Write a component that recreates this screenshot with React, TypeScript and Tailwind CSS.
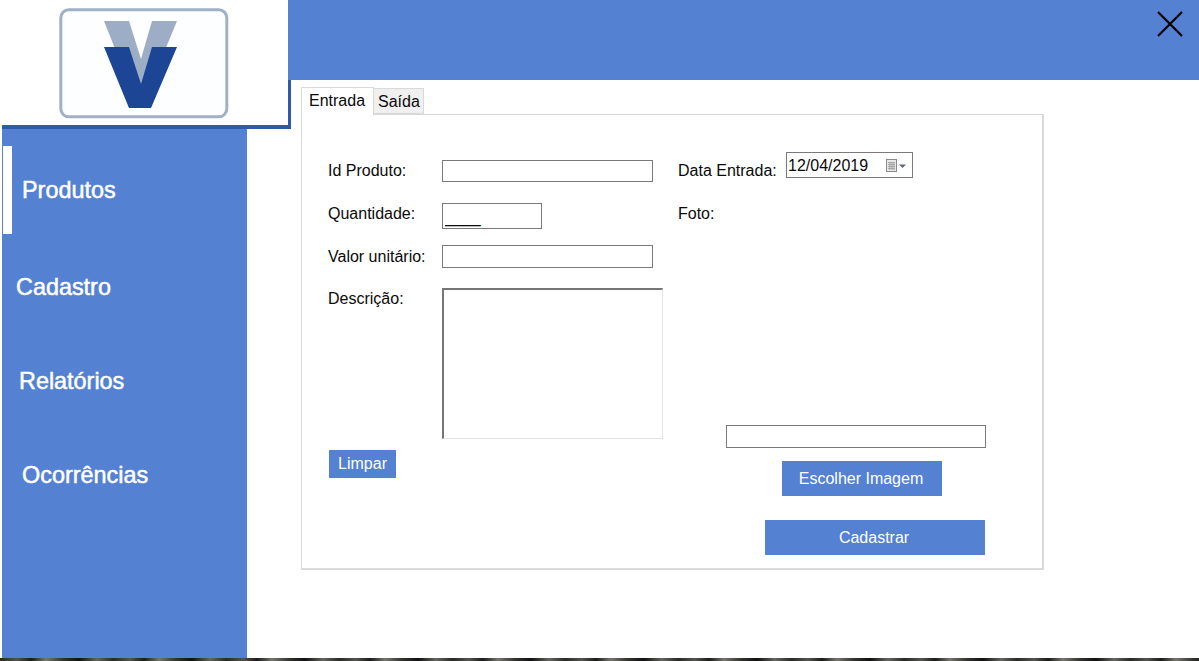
import React from "react";

const inputCls = "block border border-[#7a7a7a] bg-white outline-none";
const btn = "flex items-center justify-center bg-[#5481d1] text-white text-[16px]";

function Logo() {
  return (
    <svg width="286" height="125" viewBox="2 0 286 125" className="block">
      <rect x="60.8" y="9.8" width="166" height="107" rx="8" fill="#fdfeff" stroke="#a0b0c8" strokeWidth="3" />
      <polygon points="104,21 129,21 141,59 152,21 177,21 151,84 129,84" fill="#9dadc6" />
      <polygon points="104,47 129,47 141,84 152,47 177,47 151,108 129,108" fill="#1c4596" />
    </svg>
  );
}

function NavItem({ label, className }: { label: string; className: string }) {
  return <div className={"text-white text-[23.4px] leading-[24px] [-webkit-text-stroke:0.5px_white] " + className}>{label}</div>;
}

function Row({ label, children, className, labelClass }: { label: string; children: React.ReactNode; className?: string; labelClass?: string }) {
  return (
    <div className={"flex items-center " + (className ?? "")}>
      <div className={"w-[114px] shrink-0 text-[16px] leading-[18px] " + (labelClass ?? "")}>{label}</div>
      {children}
    </div>
  );
}

export default function App() {
  return (
    <div className="w-[1199px] h-[661px] overflow-hidden bg-white text-[#0a0a0a] font-['Liberation_Sans',Arial,sans-serif]">
      <div className="flex h-[658px]">
        <div className="w-[288px] shrink-0 flex flex-col">
          <div className="ml-[2px] h-[129px] border-b-4 border-[#2e5aac] bg-white">
            <Logo />
          </div>
          <nav className="ml-[2px] w-[245px] flex-1 bg-[#5481d1] flex flex-col">
            <div className="mt-[17px] flex items-center h-[88px] ml-[1px]">
              <div className="w-[9px] h-[88px] bg-white" />
              <NavItem label="Produtos" className="ml-[10px]" />
            </div>
            <NavItem label="Cadastro" className="ml-[14px] mt-[41px]" />
            <NavItem label="Relatórios" className="ml-[17px] mt-[70px]" />
            <NavItem label="Ocorrências" className="ml-[20px] mt-[70px]" />
          </nav>
        </div>

        <div className="flex-1 flex flex-col">
          <header className="h-[80px] bg-[#5481d1] flex justify-end pt-[11px] pr-[16px]">
            <svg width="26" height="26" viewBox="0 0 26 26" className="block">
              <path d="M1 1 L25 25 M25 1 L1 25" stroke="#000" strokeWidth="2.2" fill="none" />
            </svg>
          </header>
          <div className="flex flex-1">
            <div className="w-[3px] h-[49px] bg-[#2e5aac]" />
            <div className="ml-[10px] pt-[7px]">
              <div className="flex items-end h-[28px] relative z-10">
                <div className="w-[73px] h-[28px] border border-b-0 border-[#d9d9d9] bg-white pl-[7px] pt-[3px] text-[16px] leading-[19px]">Entrada</div>
                <div className="w-[50px] h-[26px] border border-l-0 border-[#d9d9d9] bg-[#f0f0f0] pl-[4px] pt-[3px] text-[16px] leading-[19px] -translate-y-[1px]">Saída</div>
              </div>
              <div className="-mt-[1px] w-[743px] h-[456px] border border-[#d9d9d9] border-r-2 border-b-2 bg-white flex">
                <div className="w-[376px] shrink-0 pl-[26px] pt-[45px] flex flex-col">
                  <Row label="Id Produto:">
                    <input readOnly className={inputCls + " w-[211px] h-[22px]"} />
                  </Row>
                  <Row label="Quantidade:" className="mt-[21px]" labelClass="-translate-y-[2px]">
                    <input readOnly value="____" className={inputCls + " w-[100px] h-[26px] pl-[2px] pt-[3px] text-[16px]"} />
                  </Row>
                  <Row label="Valor unitário:" className="mt-[16px]">
                    <input readOnly className={inputCls + " w-[211px] h-[23px]"} />
                  </Row>
                  <div className="flex items-start mt-[20px]">
                    <div className="w-[114px] shrink-0 pt-[2px] text-[16px] leading-[18px]">Descrição:</div>
                    <div className="w-[221px] h-[151px] border border-[#e3e3e3] border-t-[#767676] border-l-[#767676] border-t-2 border-l-2" />
                  </div>
                  <div className={btn + " mt-[11px] ml-[1px] w-[67px] h-[28px]"}>Limpar</div>
                </div>
                <div className="flex-1 pt-[37px] flex flex-col">
                  <div className="flex items-start">
                    <div className="pt-[10px] text-[16px] leading-[18px] w-[108px]">Data Entrada:</div>
                    <div className="w-[127px] h-[26px] border border-[#7a7a7a] flex items-center pl-[1px] pt-[1px] text-[16px] leading-[18px]">
                      <span className="w-[98px]">12/04/2019</span>
                      <svg width="22" height="14" viewBox="0 0 22 14" className="block">
                        <rect x="0.5" y="0.5" width="10" height="12" fill="#e8e8e8" stroke="#8a8a8a" />
                        <path d="M2 3.5H9M2 5.5H9M2 7.5H9M2 9.5H9M4 3V11M6 3V11M8 3V11" stroke="#a5a5a5" strokeWidth="1" />
                        <path d="M13 5.5H20L16.5 9Z" fill="#5a6680" />
                      </svg>
                    </div>
                  </div>
                  <div className="mt-[25px] text-[16px] leading-[18px]">Foto:</div>
                  <input readOnly className={inputCls + " mt-[202px] ml-[48px] w-[260px] h-[23px]"} />
                  <div className={btn + " mt-[13px] ml-[104px] w-[160px] h-[35px] pr-[2px]"}>Escolher Imagem</div>
                  <div className={btn + " mt-[24px] ml-[87px] w-[220px] h-[35px] pr-[2px]"}>Cadastrar</div>
                </div>
              </div>
            </div>
          </div>
        </div>
      </div>
      <div className="h-[3px] bg-[repeating-linear-gradient(90deg,#2a2a24_0,#55554f_17px,#1c1c18_31px,#77776f_46px,#33332f_63px,#111_79px,#66665f_97px,#2b2b27_113px)]" />
    </div>
  );
}
